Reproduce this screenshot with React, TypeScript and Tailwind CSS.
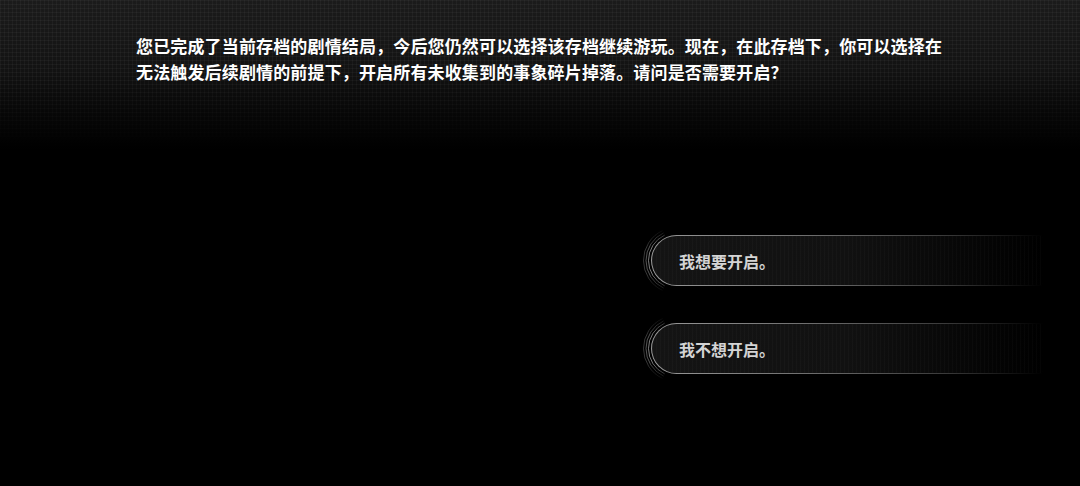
import React from "react";

function Arcs() {
  return (
    <svg
      className="absolute left-[-12px] top-[-8px] h-[67px] w-[44px]"
      viewBox="0 0 44 67"
      fill="none"
    >
      <defs>
        <linearGradient id="arcfade" x1="0" y1="0" x2="0" y2="67" gradientUnits="userSpaceOnUse">
          <stop offset="0" stopColor="#c4c4c4" stopOpacity="0" />
          <stop offset="0.3" stopColor="#c4c4c4" stopOpacity="0.8" />
          <stop offset="0.7" stopColor="#c4c4c4" stopOpacity="0.8" />
          <stop offset="1" stopColor="#c4c4c4" stopOpacity="0" />
        </linearGradient>
      </defs>
      <path d="M25.67 8.12 A28 28 0 0 0 25.67 58.88" stroke="url(#arcfade)" strokeWidth="1" opacity="0.8" />
      <path d="M24.61 5.86 A30.5 30.5 0 0 0 24.61 61.14" stroke="url(#arcfade)" strokeWidth="1" opacity="0.55" />
      <path d="M23.55 3.59 A33 33 0 0 0 23.55 63.41" stroke="url(#arcfade)" strokeWidth="1" opacity="0.35" />
    </svg>
  );
}

function Choice({ label }: { label: string }) {
  return (
    <div className="relative ml-[651px] w-[392px] h-[51px]">
      <Arcs />
      <div className="absolute inset-0 rounded-l-full p-px bg-[linear-gradient(to_right,#9a9a9a_0%,#6e6e6e_40%,#3a3a3a_75%,rgba(0,0,0,0)_100%)]">
        <div className="h-full w-full rounded-l-full bg-[linear-gradient(to_right,#141414_0%,#111111_50%,#050505_85%,#000000_100%)] relative overflow-hidden flex items-center pl-[27px]">
          <div className="absolute inset-0 opacity-40 bg-[linear-gradient(to_right,rgba(255,255,255,0.05)_1px,transparent_1px)] bg-[length:4px_4px]" />
          <span
            className="relative text-[16px] font-bold text-[#d4d4d4] leading-none"
            style={{ fontFamily: '"Noto Sans CJK SC", "Noto Sans", sans-serif' }}
          >
            {label}
          </span>
        </div>
      </div>
    </div>
  );
}

export default function App() {
  return (
    <div className="relative w-[1080px] h-[486px] bg-black overflow-hidden">
      <div className="absolute inset-x-0 top-0 h-[150px] bg-[linear-gradient(to_bottom,#1b1b1b_0%,#131313_45%,#070707_75%,#000000_100%)]" />
      <div className="absolute inset-x-0 top-0 h-[150px] bg-[linear-gradient(to_right,rgba(255,255,255,0.035)_1px,transparent_1px),linear-gradient(to_bottom,rgba(255,255,255,0.035)_1px,transparent_1px)] bg-[length:4px_4px] [mask-image:linear-gradient(to_bottom,black_0%,black_50%,transparent_100%)]" />
      <div className="relative flex flex-col">
        <p
          className="ml-[136px] mt-[33px] w-[812px] text-[17px] tracking-[0.15px] font-bold leading-[26px] text-white"
          style={{ fontFamily: '"Noto Sans CJK SC", "Noto Sans", sans-serif' }}
        >
          您已完成了当前存档的剧情结局，今后您仍然可以选择该存档继续游玩。现在，在此存档下，你可以选择在无法触发后续剧情的前提下，开启所有未收集到的事象碎片掉落。请问是否需要开启？
        </p>
        <div className="mt-[150px] flex flex-col gap-[37px]">
          <Choice label="我想要开启。" />
          <Choice label="我不想开启。" />
        </div>
      </div>
    </div>
  );
}
